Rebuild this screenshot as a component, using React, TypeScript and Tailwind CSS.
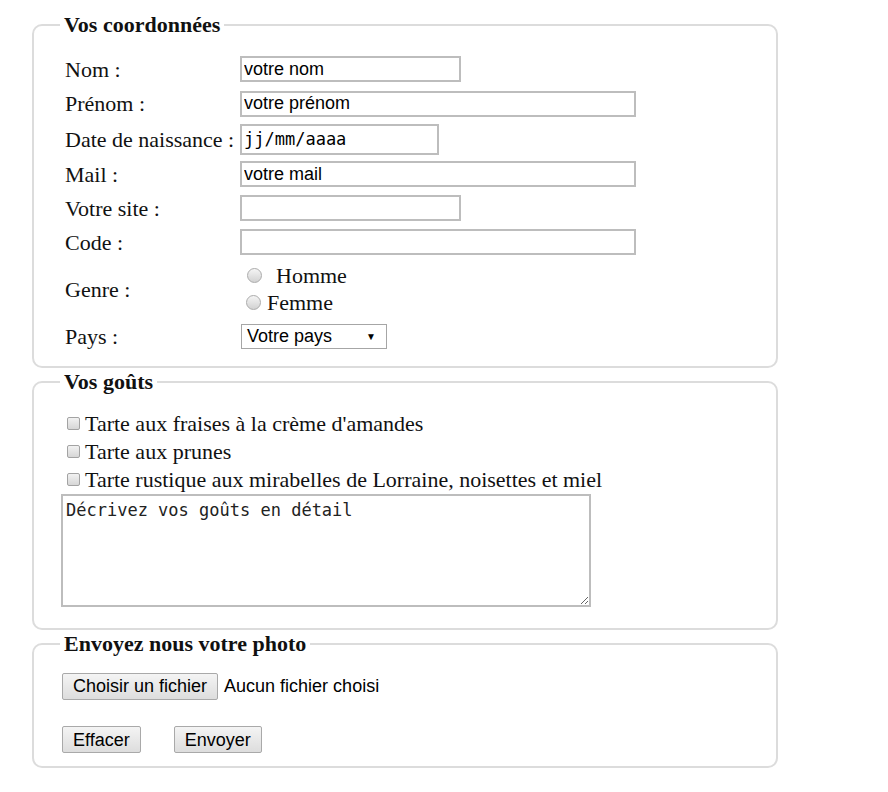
import React from "react";

const serif = { fontFamily: '"Liberation Serif", "Times New Roman", serif' };
const sans = { fontFamily: '"Liberation Sans", Arial, sans-serif' };
const mono = { fontFamily: '"DejaVu Sans Mono", "Liberation Mono", monospace' };

function Field({ label, h, children }: { label: string; h: string; children: React.ReactNode }) {
  return (
    <div className={`flex items-center ${h}`}>
      <span className="w-[180px] shrink-0 pl-[5px]">{label}</span>
      {children}
    </div>
  );
}

function TextBox({ w, value, h = "h-[26px]", isMono = false }: { w: string; value?: string; h?: string; isMono?: boolean }) {
  return (
    <input
      type="text"
      defaultValue={value}
      className={`${w} ${h} border-2 border-[#bdbdbd] bg-white px-[2px] text-black outline-none ${isMono ? "text-[17px]" : "text-[18px]"}`}
      style={isMono ? mono : sans}
    />
  );
}

function Radio() {
  return <span className="inline-block h-[15px] w-[15px] rounded-full border border-[#ababab] bg-gradient-to-b from-[#f5f5f5] to-[#d2d2d2]" />;
}

function Check() {
  return <span className="inline-block h-[13px] w-[13px] shrink-0 rounded-[2px] border border-[#a3a3a3] bg-gradient-to-b from-[#f2f2f2] to-[#d6d6d6]" />;
}

function Btn({ children }: { children: React.ReactNode }) {
  return (
    <button
      type="button"
      className="h-[27px] rounded-[2px] border border-[#a9a9a9] bg-gradient-to-b from-[#f4f4f4] to-[#dddddd] px-[10px] text-[18px] leading-none text-black"
      style={sans}
    >
      {children}
    </button>
  );
}

function Legend({ children }: { children: React.ReactNode }) {
  return <legend className="px-[4px] text-[22px] font-bold leading-[25px]">{children}</legend>;
}

export default function App() {
  return (
    <div className="min-h-[792px] w-[888px] bg-white pl-[32px] pt-[12px] text-[22px] text-[#111]" style={serif}>
      <fieldset className="w-[746px] rounded-[10px] border-2 border-[#dcdcdc] pb-[12px] pl-[26px] pt-[15px]">
        <Legend>Vos coordonnées</Legend>
        <Field label="Nom :" h="h-[34px]">
          <TextBox w="w-[221px]" value="votre nom" />
        </Field>
        <Field label="Prénom :" h="h-[35px]">
          <TextBox w="w-[396px]" value="votre prénom" />
        </Field>
        <Field label="Date de naissance :" h="h-[36px]">
          <TextBox w="w-[199px]" h="h-[31px]" value="jj/mm/aaaa" isMono />
        </Field>
        <Field label="Mail :" h="h-[34px]">
          <TextBox w="w-[396px]" value="votre mail" />
        </Field>
        <Field label="Votre site :" h="h-[34px]">
          <TextBox w="w-[221px]" />
        </Field>
        <Field label="Code :" h="h-[34px]">
          <TextBox w="w-[396px]" />
        </Field>
        <Field label="Genre :" h="h-[60px]">
          <div className="flex flex-col">
            <label className="flex h-[27px] items-center">
              <span className="ml-[7px] flex"><Radio /></span>
              <span className="ml-[14px]">Homme</span>
            </label>
            <label className="flex h-[27px] items-center">
              <span className="ml-[6px] flex"><Radio /></span>
              <span className="ml-[6px]">Femme</span>
            </label>
          </div>
        </Field>
        <Field label="Pays :" h="h-[35px]">
          <div className="ml-[1px] flex h-[25px] w-[146px] items-center justify-between border border-[#a6a6a6] bg-white pl-[5px] pr-[10px] text-[18px] text-black" style={sans}>
            <span>Votre pays</span>
            <span className="text-[10px]">▼</span>
          </div>
        </Field>
      </fieldset>

      <fieldset className="mt-[1px] w-[746px] rounded-[10px] border-2 border-[#dcdcdc] pb-[21px] pl-[26px] pt-[15px]">
        <Legend>Vos goûts</Legend>
        {[
          "Tarte aux fraises à la crème d'amandes",
          "Tarte aux prunes",
          "Tarte rustique aux mirabelles de Lorraine, noisettes et miel",
        ].map((t) => (
          <label key={t} className="flex h-[28px] items-center">
            <span className="ml-[7px] flex"><Check /></span>
            <span className="ml-[5px]">{t}</span>
          </label>
        ))}
        <textarea
          defaultValue="Décrivez vos goûts en détail"
          className="ml-[1px] mt-[1px] block h-[113px] w-[530px] resize border-2 border-[#bdbdbd] px-[3px] py-[3px] text-[17px] leading-[22px] text-[#222] outline-none"
          style={mono}
        />
      </fieldset>

      <fieldset className="mt-[1px] w-[746px] rounded-[10px] border-2 border-[#dcdcdc] pb-[13px] pl-[26px] pt-[15px]">
        <Legend>Envoyez nous votre photo</Legend>
        <div className="ml-[2px] flex h-[30px] items-center gap-[6px] text-[18px]" style={sans}>
          <Btn>Choisir un fichier</Btn>
          <span className="text-black">Aucun fichier choisi</span>
        </div>
        <div className="ml-[2px] mt-[25px] flex gap-[33px]">
          <Btn>Effacer</Btn>
          <Btn>Envoyer</Btn>
        </div>
      </fieldset>
    </div>
  );
}
